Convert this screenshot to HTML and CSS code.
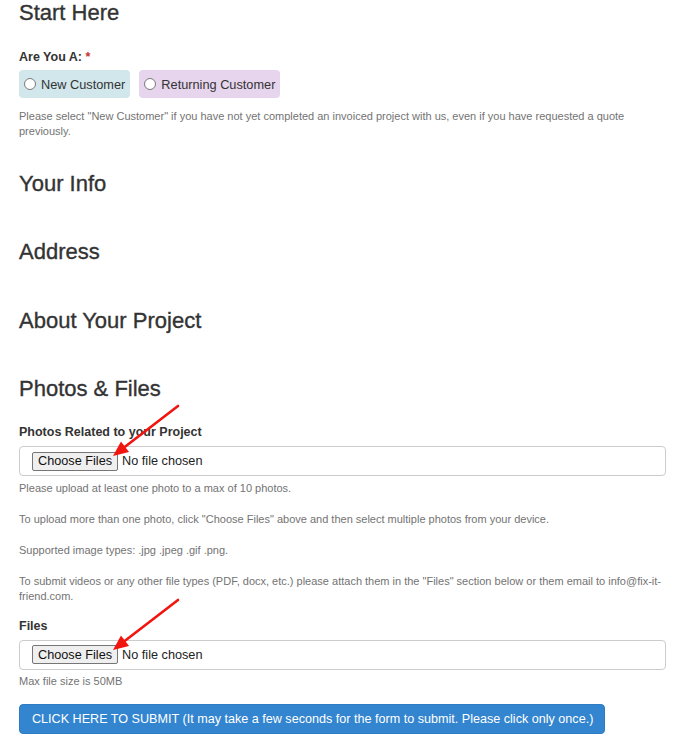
FILE: index.html
```html
<!DOCTYPE html>
<html lang="en">
<head>
<meta charset="utf-8">
<title>Start Here</title>
<link rel="stylesheet" href="styles.css">
</head>
<body>
<main class="form">
  <section class="section section-start">
    <h2 class="section-title">Start Here</h2>
    <div class="field">
      <div class="field-label">Are You A: <span class="req">*</span></div>
      <div class="choices">
        <label class="choice choice-new"><span class="radio"></span>New Customer</label>
        <label class="choice choice-returning"><span class="radio"></span>Returning Customer</label>
      </div>
      <p class="help help-tight">Please select "New Customer" if you have not yet completed an invoiced project with us, even if you have requested a quote previously.</p>
    </div>
  </section>

  <section class="section section-empty">
    <h2 class="section-title">Your Info</h2>
  </section>

  <section class="section section-empty">
    <h2 class="section-title">Address</h2>
  </section>

  <section class="section section-empty">
    <h2 class="section-title">About Your Project</h2>
  </section>

  <section class="section section-files">
    <h2 class="section-title">Photos &amp; Files</h2>
    <div class="field field-first">
      <div class="field-label">Photos Related to your Project</div>
      <div class="file-box">
        <span class="file-btn">Choose Files</span>
        <span class="file-status">No file chosen</span>
        <svg class="pointer" width="80" height="64" viewBox="0 0 80 64" aria-hidden="true">
          <line x1="73" y1="6" x2="20" y2="46.8" stroke="#f2150f" stroke-width="2.6" stroke-linecap="round"/>
          <polygon points="8,56 24,51.9 16,41.6" fill="#f2150f"/>
        </svg>
      </div>
      <div class="help-group">
        <p class="help">Please upload at least one photo to a max of 10 photos.</p>
        <p class="help">To upload more than one photo, click "Choose Files" above and then select multiple photos from your device.</p>
        <p class="help">Supported image types: .jpg .jpeg .gif .png.</p>
        <p class="help">To submit videos or any other file types (PDF, docx, etc.) please attach them in the "Files" section below or them email to info@fix-it-friend.com.</p>
      </div>
    </div>

    <div class="field field-second">
      <div class="field-label">Files</div>
      <div class="file-box">
        <span class="file-btn">Choose Files</span>
        <span class="file-status">No file chosen</span>
        <svg class="pointer" width="80" height="64" viewBox="0 0 80 64" aria-hidden="true">
          <line x1="73" y1="6" x2="20" y2="46.8" stroke="#f2150f" stroke-width="2.6" stroke-linecap="round"/>
          <polygon points="8,56 24,51.9 16,41.6" fill="#f2150f"/>
        </svg>
      </div>
      <div class="help-group">
        <p class="help">Max file size is 50MB</p>
      </div>
    </div>

    <button class="submit" type="button">CLICK HERE TO SUBMIT (It may take a few seconds for the form to submit. Please click only once.)</button>
  </section>
</main>
</body>
</html>
```

FILE: styles.css
```css
* {
  box-sizing: border-box;
}

html, body {
  margin: 0;
  padding: 0;
  background: #ffffff;
}

body {
  font-family: "Liberation Sans", Arial, Helvetica, sans-serif;
  color: #333333;
}

.form {
  display: flex;
  flex-direction: column;
  padding: 0 17px 0 19px;
}

.section {
  display: flex;
  flex-direction: column;
}

.section-start {
  margin-bottom: 32.5px;
}

.section-empty {
  margin-bottom: 42.4px;
}

.section-title {
  margin: 0;
  font-size: 22px;
  line-height: 26px;
  font-weight: normal;
  color: #333333;
  -webkit-text-stroke: 0.35px #333333;
}

.field {
  display: flex;
  flex-direction: column;
  margin-top: 23px;
}

.field-first {
  margin-top: 22px;
}

.field-second {
  margin-top: 14px;
}

.field-label {
  font-size: 12.5px;
  line-height: 17px;
  font-weight: bold;
  color: #333333;
}

.req {
  color: #c9302c;
}

.choices {
  display: flex;
  gap: 9px;
  margin-top: 4px;
}

.choice {
  display: flex;
  align-items: center;
  height: 28px;
  padding: 0 5px 0 5px;
  border-radius: 4px;
  font-size: 12.75px;
  color: #333333;
}

.choice-new {
  background: #d1e7ec;
}

.choice-returning {
  background: #e6d5ed;
}

.radio {
  width: 12px;
  height: 12px;
  border: 1px solid #7a7a7a;
  border-radius: 50%;
  background: #ffffff;
  margin-right: 5px;
  flex: none;
}

.help {
  margin: 0;
  font-size: 11px;
  line-height: 15px;
  color: #737373;
}

.help-tight {
  margin-top: 10.5px;
}

.help-group {
  display: flex;
  flex-direction: column;
  gap: 16px;
  margin-top: 4.5px;
}

.file-box {
  position: relative;
  display: flex;
  align-items: center;
  height: 30px;
  margin-top: 5px;
  padding-left: 12px;
  border: 1px solid #cccccc;
  border-radius: 4px;
  background: #ffffff;
  font-size: 12.7px;
  color: #222222;
}

.file-btn {
  display: flex;
  align-items: center;
  height: 19px;
  padding: 0 5px;
  border: 1px solid #767676;
  border-radius: 2px;
  background: #efefef;
  color: #111111;
  font-size: 12.7px;
}

.file-status {
  margin-left: 4px;
}

.pointer {
  position: absolute;
  left: 85px;
  top: -47px;
  overflow: visible;
}

.submit {
  align-self: flex-start;
  margin-top: 14.5px;
  width: 586px;
  height: 30px;
  padding: 0 0 0 12px;
  border: 1px solid #2e7dc4;
  border-radius: 4px;
  background: #3385cf;
  color: #ffffff;
  font-family: "Liberation Sans", Arial, Helvetica, sans-serif;
  font-size: 12.6px;
  text-align: left;
  white-space: nowrap;
  overflow: hidden;
  cursor: pointer;
}
```
